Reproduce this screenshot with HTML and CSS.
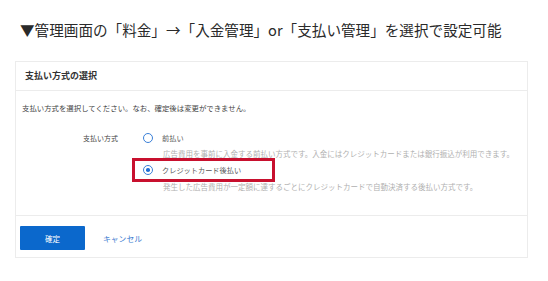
FILE: index.html
```html
<!DOCTYPE html>
<html lang="ja">
<head>
<meta charset="utf-8">
<link rel="stylesheet" href="styles.css">
</head>
<body>
<div class="page">
  <p class="heading">▼管理画面の「料金」→「入金管理」or「支払い管理」を選択で設定可能</p>
  <div class="card">
    <div class="card-head">支払い方式の選択</div>
    <div class="card-body">
      <p class="intro">支払い方式を選択してください。なお、確定後は変更ができません。</p>
      <div class="form-row">
        <div class="label">支払い方式</div>
        <div class="options">
          <div class="option">
            <span class="radio"></span>
            <span class="opt-text">前払い</span>
          </div>
          <p class="desc">広告費用を事前に入金する前払い方式です。入金にはクレジットカードまたは銀行振込が利用できます。</p>
          <div class="highlight">
            <div class="option">
              <span class="radio checked"></span>
              <span class="opt-text">クレジットカード後払い</span>
            </div>
          </div>
          <p class="desc">発生した広告費用が一定額に達するごとにクレジットカードで自動決済する後払い方式です。</p>
        </div>
      </div>
    </div>
    <div class="card-foot">
      <button class="btn-primary">確定</button>
      <span class="btn-link">キャンセル</span>
    </div>
  </div>
</div>
</body>
</html>
```
FILE: styles.css
```css
* { box-sizing: border-box; }
html, body { margin: 0; padding: 0; background: #fff; }
body { font-family: "Noto Sans CJK JP", "Noto Sans", sans-serif; color: #333; }
.page { padding: 20px 0 0 20px; width: 548px; height: 281px; overflow: hidden; }
p { margin: 0; }
.heading { font-size: 14.6px; line-height: 20px; color: #2a2a2a; white-space: nowrap; }
.card {
  margin: 21px 0 0 -5px;
  width: 513px;
  border: 1px solid #ececec;
  background: #fff;
}
.card-head {
  height: 29px;
  border-bottom: 1px solid #ececec;
  padding-left: 9px;
  font-size: 9px;
  font-weight: 700;
  line-height: 28px;
  color: #333;
}
.card-body {
  padding: 11px 6px 23px;
  border-bottom: 1px solid #ececec;
}
.intro { font-size: 7.4px; line-height: 12px; color: #444; white-space: nowrap; }
.form-row { display: flex; margin-top: 17px; gap: 25px; }
.label { width: 96px; text-align: right; font-size: 7px; line-height: 14px; color: #444; }
.options { display: flex; flex-direction: column; }
.option { display: flex; align-items: center; gap: 9px; height: 14px; }
.radio {
  width: 10px; height: 10px; border-radius: 50%;
  border: 1.2px solid #3a7fd8;
  background: #fff;
  position: relative;
  flex: none;
}
.radio.checked::after {
  content: "";
  position: absolute;
  left: 2px; top: 2px;
  width: 3.6px; height: 3.6px;
  border-radius: 50%;
  background: #1f6fd6;
}
.opt-text { font-size: 7.2px; color: #555; white-space: nowrap; }
.desc {
  font-size: 7.5px; line-height: 10px; color: #b0b0b0;
  margin-left: 20px; white-space: nowrap;
}
.option + .desc { margin-top: 4px; }
.highlight {
  margin: -1px 0 0 -11px;
  width: 143px;
  height: 24px;
  border: 3px solid #c8102e;
  padding-left: 8px;
  display: flex;
  align-items: center;
}
.card-foot {
  display: flex;
  align-items: center;
  gap: 18px;
  padding: 10px 0 7px 4px;
}
.btn-primary {
  width: 65px; height: 24px;
  background: #0b68cc;
  border: none; border-radius: 1px;
  color: #fff;
  font-family: inherit;
  font-size: 7.5px;
  padding: 0;
}
.btn-link { font-size: 7.8px; color: #3d7bd0; }
```
